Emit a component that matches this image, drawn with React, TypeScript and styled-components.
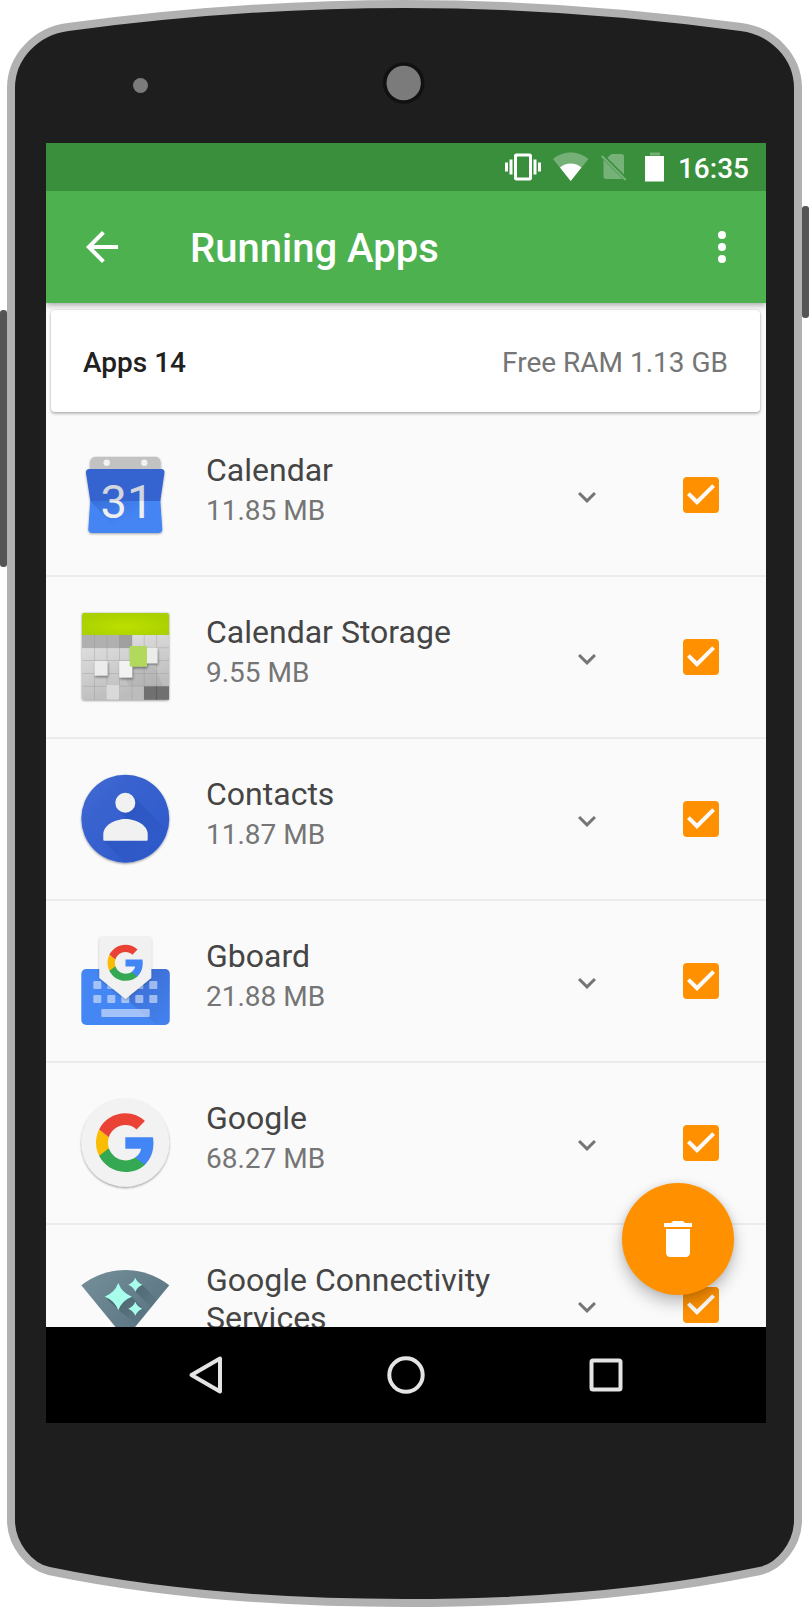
import React, { useState } from "react";
import styled, { createGlobalStyle } from "styled-components";

const GlobalStyle = createGlobalStyle`
  *, *::before, *::after { box-sizing: border-box; }
  body { margin: 0; background: #ffffff; font-family: Roboto, "Noto Sans", sans-serif; }
  h1, h2, p, ul { margin: 0; padding: 0; }
  ul { list-style: none; }
`;

const colors = {
  shell: "#1e1e1e",
  rim: "#b1b1b1",
  hardware: "#555555",
  primaryDark: "#3a8f3d",
  primary: "#4db150",
  accent: "#ff9100",
  surface: "#fafafa",
  divider: "#ececec",
  strong: "#212121",
  name: "#454545",
  muted: "#757575",
};

/* ---------- phone shell ---------- */

const Device = styled.main`
  display: flex;
  flex-direction: column;
  width: 100%;
`;

const CapSvg = styled.svg<{ $height: number }>`
  display: block;
  width: 100%;
  height: ${(p) => p.$height}px;
`;

const DeviceBody = styled.div`
  display: grid;
  grid-template-columns: 7px minmax(0, 1fr) 7px;
  align-items: start;
`;

const HardwareKey = styled.div<{ $from: number; $length: number }>`
  margin-top: ${(p) => p.$from}px;
  height: ${(p) => p.$length}px;
  background: ${colors.hardware};
  border-radius: 3px;
`;

const Bezel = styled.div`
  padding: 0 28px 0 31px;
  background: ${colors.shell};
  border: solid ${colors.rim};
  border-width: 0 8px;
`;

const Screen = styled.div`
  display: flex;
  flex-direction: column;
  background: ${colors.surface};
`;

/* ---------- status bar and toolbar ---------- */

const StatusBar = styled.div`
  position: relative;
  z-index: 2;
  display: flex;
  align-items: center;
  justify-content: flex-end;
  gap: 12px;
  height: 48px;
  padding-right: 17px;
  background: ${colors.primaryDark};
  color: #ffffff;
`;

const Clock = styled.time`
  padding-top: 3px;
  font-size: 28px;
  font-weight: 500;
  line-height: 34px;
`;

const Toolbar = styled.header`
  position: relative;
  z-index: 1;
  display: flex;
  align-items: center;
  height: 112px;
  padding: 0 20px 0 32px;
  background: ${colors.primary};
  color: #ffffff;
  box-shadow: 0 2px 6px rgba(0, 0, 0, 0.35);
  clip-path: inset(0 0 -16px 0);
`;

const ToolbarTitle = styled.h1`
  flex: 1;
  padding: 4px 0 0 64px;
  font-size: 40px;
  font-weight: 500;
  line-height: 48px;
`;

const IconButton = styled.button<{ $size: number }>`
  display: flex;
  align-items: center;
  justify-content: center;
  width: ${(p) => p.$size}px;
  height: ${(p) => p.$size}px;
  padding: 0;
  border: 0;
  background: none;
  color: inherit;
  cursor: pointer;
`;

/* ---------- content ---------- */

const Content = styled.div`
  position: relative;
`;

const Viewport = styled.section`
  height: 1024px;
  overflow: hidden;
`;

const SummaryCard = styled.div`
  display: flex;
  align-items: center;
  justify-content: space-between;
  min-height: 102px;
  margin: 7px 6px 3px 5px;
  padding: 3px 32px 0;
  background: #ffffff;
  border-radius: 4px;
  box-shadow: 0 0 2px rgba(0, 0, 0, 0.2), 0 2px 3px rgba(0, 0, 0, 0.24);
  font-size: 28px;
  line-height: 34px;
`;

const AppCount = styled.h2`
  color: ${colors.strong};
  font-size: 28px;
  font-weight: 500;
`;

const FreeRam = styled.p`
  color: ${colors.muted};
`;

const Row = styled.li`
  display: flex;
  align-items: center;
  min-height: 162px;
  padding: 0 47px 0 31px;
  border-bottom: 2px solid ${colors.divider};
`;

const AppArt = styled.svg`
  flex: none;
  display: block;
  width: 96px;
  height: 96px;
`;

const RowText = styled.div`
  flex: 1;
  align-self: flex-start;
  padding: 36px 24px 0 33px;
`;

const AppName = styled.p`
  margin-bottom: 5px;
  color: ${colors.name};
  font-size: 32px;
  line-height: 38px;
`;

const AppMemory = styled.p`
  color: ${colors.muted};
  font-size: 28px;
  line-height: 34px;
`;

const ExpandButton = styled(IconButton)`
  margin: 3px 78px 0 0;
  color: ${colors.muted};
`;

const CheckWrap = styled.label`
  position: relative;
  flex: none;
  display: block;
  width: 36px;
  height: 36px;
`;

const CheckInput = styled.input`
  appearance: none;
  display: block;
  width: 36px;
  height: 36px;
  margin: 0;
  border: 4px solid ${colors.muted};
  border-radius: 4px;
  cursor: pointer;

  &:checked {
    border-color: ${colors.accent};
    background: ${colors.accent};
  }
  &:not(:checked) + svg {
    display: none;
  }
`;

const CheckMark = styled.svg`
  position: absolute;
  inset: 0;
  width: 36px;
  height: 36px;
  pointer-events: none;
`;

const Fab = styled.button`
  position: absolute;
  right: 32px;
  bottom: 32px;
  display: flex;
  align-items: center;
  justify-content: center;
  width: 112px;
  height: 112px;
  padding: 0;
  border: 0;
  border-radius: 50%;
  background: ${colors.accent};
  color: #ffffff;
  box-shadow: 0 8px 16px rgba(0, 0, 0, 0.24), 0 0 6px rgba(0, 0, 0, 0.1);
  cursor: pointer;
`;

const NavBar = styled.nav`
  display: grid;
  grid-template-columns: repeat(3, 1fr);
  align-items: center;
  justify-items: center;
  height: 96px;
  padding: 0 60px;
  background: #000000;
  color: #e4e4e4;
`;

/* ---------- drawings ---------- */

const TopCap = () => (
  <CapSvg $height={143} viewBox="0 0 809 143" preserveAspectRatio="none" aria-hidden="true">
    <path
      d="M11 150V88C11 57 36 31 68 27C180 12 292 4 404.5 4S629 12 741 27C773 31 798 57 798 88V150"
      fill={colors.shell}
      stroke={colors.rim}
      strokeWidth="8"
    />
    <circle cx="140.5" cy="85.5" r="7.5" fill="#7b7b7b" />
    <circle cx="403.7" cy="83" r="19" fill="#7b7b7b" stroke="#111111" strokeWidth="3.6" />
  </CapSvg>
);

const BottomCap = () => (
  <CapSvg $height={184} viewBox="0 0 809 184" preserveAspectRatio="none" aria-hidden="true">
    <path
      d="M11 -8V97C11 122 30 144 49 148C160 171 280 180 404.5 180S649 171 760 148C779 144 798 122 798 97V-8"
      fill={colors.shell}
      stroke={colors.rim}
      strokeWidth="8"
    />
  </CapSvg>
);

const VibrateIcon = () => (
  <svg width="36" height="36" viewBox="0 0 24 24" fill="currentColor" aria-hidden="true">
    <path d="M0 15h2V9H0v6zm3 2h2V7H3v10zm19-8v6h2V9h-2zm-3 8h2V7h-2v10zM16.5 3h-9C6.67 3 6 3.67 6 4.5v15c0 .83.67 1.5 1.5 1.5h9c.83 0 1.5-.67 1.5-1.5v-15c0-.83-.67-1.5-1.5-1.5zM16 19H8V5h8v14z" />
  </svg>
);

const WifiIcon = () => (
  <svg width="36" height="36" viewBox="0 0 36 36" fill="currentColor" aria-hidden="true">
    <path d="M17.7 32L0 10C5 5.8 11 3.4 17.7 3.4S30.4 5.8 35.4 10Z" opacity="0.3" />
    <path d="M17.7 32L7 18.5C10 15.8 13.6 14.4 17.7 14.4S25.4 15.8 28.4 18.5Z" />
  </svg>
);

const NoSimIcon = () => (
  <svg width="32" height="36" viewBox="0 0 32 36" fill="currentColor" opacity="0.3" aria-hidden="true">
    <path d="M7 8L10.5 5H20.5C22 5 23 6.1 23 7.5V25.6L6.5 9Z" />
    <path d="M2.5 10.8L21.7 30H5.2C3.6 30 2.5 29 2.5 27.500Z" />
    <path d="M0 7.800L1.5 6.300L25.5 30.300L24 31.800Z" />
  </svg>
);

const BatteryIcon = () => (
  <svg width="21" height="36" viewBox="0 0 21 36" fill="currentColor" aria-hidden="true">
    <path d="M5 3.5H15V6.5H5Z" opacity="0.3" />
    <path d="M0 7H19V32.5H0Z" />
  </svg>
);

const ArrowBackIcon = () => (
  <svg width="48" height="48" viewBox="0 0 24 24" fill="currentColor" aria-hidden="true">
    <path d="M20 11H7.83l5.59-5.59L12 4l-8 8 8 8 1.41-1.41L7.83 13H20v-2z" />
  </svg>
);

const MoreIcon = () => (
  <svg width="48" height="48" viewBox="0 0 24 24" fill="currentColor" aria-hidden="true">
    <circle cx="12" cy="6" r="2" />
    <circle cx="12" cy="12" r="2" />
    <circle cx="12" cy="18" r="2" />
  </svg>
);

const ChevronIcon = () => (
  <svg width="36" height="36" viewBox="0 0 24 24" fill="currentColor" aria-hidden="true">
    <path d="M16.59 8.59L12 13.17 7.41 8.59 6 10l6 6 6-6z" />
  </svg>
);

const TrashIcon = () => (
  <svg width="48" height="48" viewBox="0 0 24 24" fill="currentColor" aria-hidden="true">
    <path d="M6 19c0 1.1.9 2 2 2h8c1.1 0 2-.9 2-2V7H6v12zM19 4h-3.5l-1-1h-5l-1 1H5v2h14V4z" />
  </svg>
);

const NavBackIcon = () => (
  <svg width="44" height="44" viewBox="0 0 44 44" fill="none" stroke="currentColor" strokeWidth="4" strokeLinejoin="round" aria-hidden="true">
    <path d="M7.5 22L36 5.5V38.5Z" />
  </svg>
);

const NavHomeIcon = () => (
  <svg width="44" height="44" viewBox="0 0 44 44" fill="none" stroke="currentColor" strokeWidth="4" aria-hidden="true">
    <circle cx="22" cy="22" r="16.7" />
  </svg>
);

const NavRecentIcon = () => (
  <svg width="44" height="44" viewBox="0 0 44 44" fill="none" stroke="currentColor" strokeWidth="4" aria-hidden="true">
    <rect x="7.5" y="7.5" width="29" height="29" rx="1.5" />
  </svg>
);

const GoogleMark = ({ cx, cy, scale }: { cx: number; cy: number; scale: number }) => (
  <g transform={`translate(${cx} ${cy}) scale(${scale}) translate(-12 -12)`}>
    <path fill="#4285f4" d="M22.56 12.25c0-.78-.07-1.53-.2-2.25H12v4.26h5.92c-.26 1.37-1.04 2.53-2.21 3.31v2.77h3.57c2.08-1.92 3.28-4.74 3.28-8.09z" />
    <path fill="#34a853" d="M12 23c2.97 0 5.46-.98 7.28-2.66l-3.57-2.77c-.98.66-2.23 1.06-3.71 1.06-2.86 0-5.29-1.93-6.16-4.53H2.18v2.84C3.99 20.53 7.7 23 12 23z" />
    <path fill="#fbbc05" d="M5.84 14.09c-.22-.66-.35-1.36-.35-2.09s.13-1.43.35-2.09L2.18 7.07C1.43 8.55 1 10.22 1 12s.43 3.45 1.18 4.93l3.66-2.84z" />
    <path fill="#ea4335" d="M12 5.38c1.62 0 3.06.56 4.21 1.64l3.15-3.15C17.45 2.09 14.97 1 12 1 7.7 1 3.99 3.47 2.18 7.07l3.66 2.84c.87-2.6 3.3-4.53 6.16-4.53z" />
  </g>
);

const CalendarArt = () => (
  <AppArt viewBox="0 0 96 96" aria-hidden="true">
    <defs>
      <linearGradient id="cal-digits" gradientUnits="userSpaceOnUse" x1="0" y1="36" x2="0" y2="72">
        <stop offset="0.5" stopColor="#d2d6de" />
        <stop offset="0.5" stopColor="#efefef" />
      </linearGradient>
      <linearGradient id="cal-shade" x1="0" y1="0" x2="1" y2="1">
        <stop offset="0" stopColor="#2f62c9" stopOpacity="0.6" />
        <stop offset="0.6" stopColor="#2f62c9" stopOpacity="0" />
      </linearGradient>
      <filter id="cal-shadow" x="-10%" y="-10%" width="120%" height="125%">
        <feDropShadow dx="0" dy="1" stdDeviation="0.8" floodOpacity="0.35" />
      </filter>
    </defs>
    <g filter="url(#cal-shadow)">
      <path d="M13 26V15.5C13 12 15.5 9.7 19 9.7H78C81.5 9.7 83.7 12 83.7 15.5V26Z" fill="#c2c2c2" />
      <path d="M13.3 53H83.3L85.3 82C85.5 84.5 83.8 86 81.3 86H15.3C12.8 86 11.1 84.5 11.3 82Z" fill="#4484f3" />
      <path d="M13.3 54H68L46 86H43.5Z" fill="url(#cal-shade)" />
      <path d="M12.5 22H84C86.5 22 87.7 23.5 87.4 26L83.3 54H13.3L9 26C8.7 23.5 10 22 12.5 22Z" fill="#3563cf" />
    </g>
    <circle cx="29.7" cy="15.7" r="3.2" fill="#f2f2f2" />
    <circle cx="67.3" cy="15.7" r="3.2" fill="#f2f2f2" />
    <text x="50" y="71" textAnchor="middle" fontFamily="Roboto, sans-serif" fontSize="47" fontWeight="400" fill="url(#cal-digits)">
      31
    </text>
  </AppArt>
);

const gridX = [5, 17.5, 30, 42.5, 55, 67.2, 79.6];
const gridY = [25.7, 38.7, 51.5, 64.5, 77.3];

const StorageArt = () => (
  <AppArt viewBox="0 0 96 96" aria-hidden="true">
    <defs>
      <radialGradient id="sto-green" cx="0.5" cy="0.6" r="0.6">
        <stop offset="0" stopColor="#bde000" />
        <stop offset="1" stopColor="#a9d000" />
      </radialGradient>
      <linearGradient id="sto-grid" x1="0" y1="0" x2="0.3" y2="1">
        <stop offset="0" stopColor="#eeeeee" />
        <stop offset="0.6" stopColor="#d2d2d2" />
        <stop offset="1" stopColor="#bcbcbc" />
      </linearGradient>
      <filter id="sto-shadow" x="-30%" y="-30%" width="170%" height="180%">
        <feDropShadow dx="0.8" dy="1.8" stdDeviation="1.3" floodOpacity="0.4" />
      </filter>
      <filter id="sto-edge" x="-10%" y="-10%" width="120%" height="120%">
        <feDropShadow dx="0" dy="0.5" stdDeviation="0.8" floodOpacity="0.45" />
      </filter>
    </defs>
    <rect x="5" y="4" width="87" height="87" rx="2" fill="url(#sto-grid)" filter="url(#sto-edge)" />
    <path d="M5 26V6Q5 4 7 4H90Q92 4 92 6V26Z" fill="url(#sto-green)" />
    <path d="M5 26H55V38.7H5Z" fill="#b0b0b0" />
    <path d="M42.5 26H55V38.7H42.5Z" fill="#9f9f9f" />
    <path d="M42.5 58H78L86 77H52Z" fill="#8c8c8c" opacity="0.2" />
    <g stroke="#8f8f8f" strokeOpacity="0.32" strokeWidth="1">
      {gridX.slice(1).map((x) => (
        <path key={x} d={`M${x} 26V91`} />
      ))}
      {gridY.slice(1).map((y) => (
        <path key={y} d={`M5 ${y}H92`} />
      ))}
    </g>
    <rect x="67" y="77.3" width="25" height="13.5" fill="#707070" />
    <path d="M79.6 77.3V91" stroke="#5e5e5e" />
    <g filter="url(#sto-shadow)">
      <rect x="17.5" y="52" width="13" height="14.5" fill="#ececec" />
      <rect x="42.2" y="52" width="13" height="16.5" fill="#f2f2f2" />
      <rect x="68" y="38.7" width="12.4" height="15.5" fill="#ececec" />
      <rect x="52.7" y="37" width="17.3" height="20.5" rx="0.8" fill="#b1da5b" />
    </g>
    <rect x="29.5" y="76" width="12.8" height="14.5" fill="#d9d9d9" />
  </AppArt>
);

const ContactsArt = () => (
  <AppArt viewBox="0 0 96 96" aria-hidden="true">
    <defs>
      <linearGradient id="con-bg" x1="0" y1="0" x2="1" y2="1">
        <stop offset="0" stopColor="#4069d2" />
        <stop offset="1" stopColor="#2b57c9" />
      </linearGradient>
      <linearGradient id="con-shade" x1="0" y1="0" x2="1" y2="1">
        <stop offset="0" stopColor="#1f47ad" stopOpacity="0.6" />
        <stop offset="0.8" stopColor="#1f47ad" stopOpacity="0" />
      </linearGradient>
      <clipPath id="con-clip">
        <circle cx="48.3" cy="47.7" r="44" />
      </clipPath>
      <filter id="con-shadow" x="-10%" y="-10%" width="120%" height="125%">
        <feDropShadow dx="0" dy="1" stdDeviation="1" floodOpacity="0.4" />
      </filter>
    </defs>
    <circle cx="48.3" cy="47.7" r="44" fill="url(#con-bg)" filter="url(#con-shadow)" />
    <g clipPath="url(#con-clip)">
      <path d="M55.3 24.5L96 65V96H52L26.5 69.5H70L41 38.5Z" fill="url(#con-shade)" />
    </g>
    <circle cx="48.3" cy="31.7" r="10" fill="#f1f1f1" />
    <path d="M26.3 68.7V63C26.3 54.5 38 48 48.5 48S70.7 54.5 70.7 63V68.7Q70.7 69.7 69.7 69.7H27.3Q26.3 69.7 26.3 68.7Z" fill="#f1f1f1" />
  </AppArt>
);

const keyColumns = [16.3, 30.3, 44.3, 58.3, 72.3];

const GboardArt = () => (
  <AppArt viewBox="0 0 96 96" aria-hidden="true">
    <defs>
      <linearGradient id="gb-shade" gradientUnits="userSpaceOnUse" x1="60" y1="46" x2="90" y2="86">
        <stop offset="0" stopColor="#3c6bd0" stopOpacity="0.85" />
        <stop offset="1" stopColor="#3c6bd0" stopOpacity="0.2" />
      </linearGradient>
      <filter id="gb-shadow" x="-10%" y="-10%" width="120%" height="125%">
        <feDropShadow dx="0" dy="0.8" stdDeviation="0.8" floodOpacity="0.3" />
      </filter>
    </defs>
    <rect x="4.3" y="36" width="88.4" height="56" rx="5" fill="#4486f4" />
    <path d="M74.3 36H87.7Q92.7 36 92.7 41V87Q92.7 92 87.7 92H80L48.5 66Z" fill="url(#gb-shade)" />
    <g fill="#ffffff" opacity="0.5">
      {[48, 62].map((y) => keyColumns.map((x) => <rect key={`${x}-${y}`} x={x} y={y} width="8" height="8" rx="1" />))}
      <rect x="24.3" y="76" width="48.4" height="8" rx="1" />
    </g>
    <path d="M25.3 4H71.3Q74.3 4 74.3 7V45L48.5 66L22.3 45V7Q22.3 4 25.3 4Z" fill="#f1f1f1" filter="url(#gb-shadow)" />
    <GoogleMark cx={48.5} cy={29.8} scale={1.636} />
  </AppArt>
);

const GoogleArt = () => (
  <AppArt viewBox="0 0 96 96" aria-hidden="true">
    <defs>
      <filter id="goo-shadow" x="-10%" y="-10%" width="120%" height="125%">
        <feDropShadow dx="0" dy="1.2" stdDeviation="0.9" floodOpacity="0.4" />
      </filter>
    </defs>
    <circle cx="48.3" cy="47.7" r="44" fill="#f2f2f2" filter="url(#goo-shadow)" />
    <GoogleMark cx={48.3} cy={47.7} scale={2.667} />
  </AppArt>
);

const star = (cx: number, cy: number, r: number) => {
  const k = r * 0.27;
  return `M${cx} ${cy - r}Q${cx + k} ${cy - k} ${cx + r} ${cy}Q${cx + k} ${cy + k} ${cx} ${cy + r}Q${cx - k} ${cy + k} ${cx - r} ${cy}Q${cx - k} ${cy - k} ${cx} ${cy - r}Z`;
};

const ConnectivityArt = () => (
  <AppArt viewBox="0 0 96 96" aria-hidden="true">
    <defs>
      <linearGradient id="net-bg" x1="0" y1="0" x2="1" y2="0.8">
        <stop offset="0" stopColor="#758e9a" />
        <stop offset="1" stopColor="#57737f" />
      </linearGradient>
      <linearGradient id="net-shade" gradientUnits="userSpaceOnUse" x1="45" y1="35" x2="72" y2="62">
        <stop offset="0" stopColor="#3c525d" stopOpacity="0.6" />
        <stop offset="1" stopColor="#3c525d" stopOpacity="0" />
      </linearGradient>
      <clipPath id="net-clip">
        <path d="M4.3 28.3A71 71 0 0 1 92.3 28.3L48.3 82Z" />
      </clipPath>
    </defs>
    <path d="M4.3 28.3A71 71 0 0 1 92.3 28.3L48.3 82Z" fill="url(#net-bg)" />
    <g clipPath="url(#net-clip)" fill="url(#net-shade)">
      <path d="M65 27.7L96 58.7V72L58.3 34.7Z" />
      <path d="M54.5 39.7L88 73V90L41.3 53L28 39.7Z" />
    </g>
    <g fill="#a7ffeb">
      <path d={star(41.3, 39.7, 13.6)} />
      <path d={star(58.3, 27.7, 7)} />
      <path d={star(58.3, 51.7, 7)} />
    </g>
  </AppArt>
);

/* ---------- page ---------- */

type AppEntry = { name: string; memory?: string; Art: () => React.ReactElement };

const apps: AppEntry[] = [
  { name: "Calendar", memory: "11.85 MB", Art: CalendarArt },
  { name: "Calendar Storage", memory: "9.55 MB", Art: StorageArt },
  { name: "Contacts", memory: "11.87 MB", Art: ContactsArt },
  { name: "Gboard", memory: "21.88 MB", Art: GboardArt },
  { name: "Google", memory: "68.27 MB", Art: GoogleArt },
  { name: "Google Connectivity Services", Art: ConnectivityArt },
];

const AppRow = ({ name, memory, Art }: AppEntry) => {
  const [selected, setSelected] = useState(true);
  return (
    <Row>
      <Art />
      <RowText>
        <AppName>{name}</AppName>
        {memory && <AppMemory>{memory}</AppMemory>}
      </RowText>
      <ExpandButton type="button" $size={36} aria-label={`Details of ${name}`}>
        <ChevronIcon />
      </ExpandButton>
      <CheckWrap>
        <CheckInput
          type="checkbox"
          aria-label={name}
          checked={selected}
          onChange={(event) => setSelected(event.target.checked)}
        />
        <CheckMark viewBox="3 3 18 18" fill={colors.surface} aria-hidden="true">
          <path d="M10 17l-5-5 1.41-1.41L10 14.17l7.59-7.59L19 8l-9 9z" />
        </CheckMark>
      </CheckWrap>
    </Row>
  );
};

export default function App() {
  return (
    <>
      <GlobalStyle />
      <Device>
        <TopCap />
        <DeviceBody>
          <HardwareKey $from={167} $length={257} />
          <Bezel>
            <Screen>
              <StatusBar>
                <VibrateIcon />
                <WifiIcon />
                <NoSimIcon />
                <BatteryIcon />
                <Clock>16:35</Clock>
              </StatusBar>
              <Toolbar>
                <IconButton type="button" $size={48} aria-label="Back">
                  <ArrowBackIcon />
                </IconButton>
                <ToolbarTitle>Running Apps</ToolbarTitle>
                <IconButton type="button" $size={48} aria-label="More options">
                  <MoreIcon />
                </IconButton>
              </Toolbar>
              <Content>
                <Viewport>
                  <SummaryCard>
                    <AppCount>Apps 14</AppCount>
                    <FreeRam>Free RAM 1.13 GB</FreeRam>
                  </SummaryCard>
                  <ul>
                    {apps.map((app) => (
                      <AppRow key={app.name} {...app} />
                    ))}
                  </ul>
                </Viewport>
                <Fab type="button" aria-label="Stop selected apps">
                  <TrashIcon />
                </Fab>
              </Content>
              <NavBar>
                <IconButton type="button" $size={48} aria-label="Navigate back">
                  <NavBackIcon />
                </IconButton>
                <IconButton type="button" $size={48} aria-label="Home">
                  <NavHomeIcon />
                </IconButton>
                <IconButton type="button" $size={48} aria-label="Recent apps">
                  <NavRecentIcon />
                </IconButton>
              </NavBar>
            </Screen>
          </Bezel>
          <HardwareKey $from={63} $length={112} />
        </DeviceBody>
        <BottomCap />
      </Device>
    </>
  );
}
